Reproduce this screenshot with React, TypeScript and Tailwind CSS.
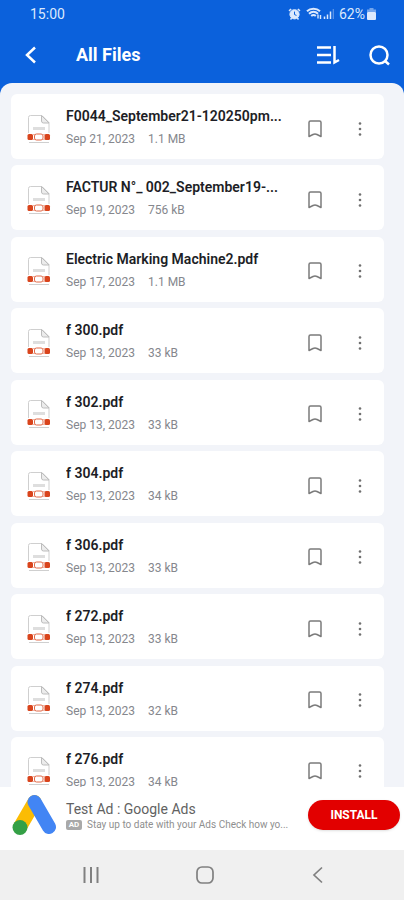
interface FileInfo {
    name: string
    date: string
    size: string
}

const files: FileInfo[] = [
    { name: 'F0044_September21-120250pm...', date: 'Sep 21, 2023', size: '1.1 MB' },
    { name: 'FACTUR N°_ 002_September19-...', date: 'Sep 19, 2023', size: '756 kB' },
    { name: 'Electric Marking Machine2.pdf', date: 'Sep 17, 2023', size: '1.1 MB' },
    { name: 'f 300.pdf', date: 'Sep 13, 2023', size: '33 kB' },
    { name: 'f 302.pdf', date: 'Sep 13, 2023', size: '33 kB' },
    { name: 'f 304.pdf', date: 'Sep 13, 2023', size: '34 kB' },
    { name: 'f 306.pdf', date: 'Sep 13, 2023', size: '33 kB' },
    { name: 'f 272.pdf', date: 'Sep 13, 2023', size: '33 kB' },
    { name: 'f 274.pdf', date: 'Sep 13, 2023', size: '32 kB' },
    { name: 'f 276.pdf', date: 'Sep 13, 2023', size: '34 kB' },
]

const StatusBar = () => (
    <div className="flex h-[27px] items-center justify-between pl-[30px] pr-7 text-sm text-[#dce9fd]">
        <span>15:00</span>
        <div className="flex items-center gap-[5px]">
            <svg width="13" height="12" viewBox="0 0 13 12" fill="none" stroke="currentColor">
                <circle cx="6.5" cy="6.3" r="4.6" fill="currentColor" />
                <path d="M1 2.8 3.2 1M12 2.8 9.8 1M2.5 11.5l1.2-1.5M10.5 11.5 9.3 10" strokeWidth="1.5" />
                <path d="M6.5 3.6v3l2 .8" stroke="#0b61dc" />
            </svg>
            <svg width="28" height="13" viewBox="0 0 28 13" fill="none" stroke="currentColor">
                <path d="M1 4.3C4.5.8 10.5.8 14 4.3M3 6.8c2.7-2.6 6.3-2.6 9 0M5.2 9c1.5-1.3 3.1-1.3 4.6 0" strokeWidth="2" />
                <path d="M12 7.5v4M14.5 8v4" strokeWidth="1.4" />
                <path d="M18.500 12V9.500M21.500 12V7.500M24.500 12V4.500" strokeWidth="1.500" />
                <path d="M27.300 12V2" strokeWidth="1.200" opacity=".4" />
            </svg>
            <div className="flex items-center gap-0.5">
                <span>62%</span>
                <svg width="9" height="12" viewBox="0 0 9 12" fill="currentColor">
                    <path d="M2.5 0h4v1.5H9V4H0V1.5h2.5z" opacity=".5" />
                    <rect y="4" width="9" height="8" rx="1" />
                </svg>
            </div>
        </div>
    </div>
)

const PdfIcon = () => (
    <svg width="24" height="30" viewBox="0 0 24 30" fill="none">
        <path d="M1.500 19V3.500a2 2 0 0 1 2-2h11.500l7 7V19" stroke="#cfcfcf" />
        <path d="M14.500 1.500V7a2 2 0 0 0 2 2H22z" fill="#ececec" stroke="#bdbdbd" />
        <path d="M6 14.500h12" stroke="#dedede" strokeWidth="3" />
        <rect x="0.500" y="20" width="5.500" height="6" rx="1.500" fill="#d9441c" />
        <rect x="17.500" y="20" width="5.500" height="6" rx="1.500" fill="#d9441c" />
        <path d="M6 20.500h2M16 20.500h2M6 25.500h2M16 25.500h2" stroke="#f0b5a4" />
        <rect x="7.500" y="20" width="8.500" height="6" rx="2" stroke="#e26a49" />
        <path d="M2 28.500h20" stroke="#cfcfcf" />
    </svg>
)

const FileCard = ({ file }: { file: FileInfo }) => (
    <li className="flex h-[65px] items-center rounded-md bg-white pl-4 pr-[18px]">
        <div className="mt-1">
            <PdfIcon />
        </div>
        <div className="ml-[15px] min-w-0 flex-1">
            <div className="truncate text-sm leading-5 font-semibold text-[#1d1e26]">{file.name}</div>
            <div className="mt-[5px] flex gap-[13px] text-xs leading-4 text-[#85878d]">
                <span>{file.date}</span>
                <span>{file.size}</span>
            </div>
        </div>
        <button className="mt-1 ml-2 shrink-0" aria-label={`Bookmark ${file.name}`}>
            <svg width="14" height="18" viewBox="0 0 14 18" fill="none" stroke="#7b7b7b" strokeWidth="1.5">
                <path d="M1 16.500V2.500a1.500 1.500 0 0 1 1.500-1.500h9A1.500 1.500 0 0 1 13 2.500v14L9 14.500q-2-1-4 0z" strokeLinejoin="round" />
            </svg>
        </button>
        <button className="mt-1 ml-8 flex w-3 shrink-0 justify-center" aria-label={`More options for ${file.name}`}>
            <svg width="4" height="16" viewBox="0 0 4 16" fill="#707070">
                <circle cx="2" cy="2.5" r="1.3" />
                <circle cx="2" cy="8" r="1.3" />
                <circle cx="2" cy="13.5" r="1.3" />
            </svg>
        </button>
    </li>
)

const AdBanner = () => (
    <div className="flex h-[63px] shrink-0 items-center bg-white pb-[7px] pl-3 pr-1">
        <svg className="shrink-0" width="46" height="42" viewBox="0 0 46 42" fill="none" strokeLinecap="round">
            <path d="M22.500 8 8 33" stroke="#fbbc04" strokeWidth="14" />
            <path d="M22.500 8 37 33" stroke="#4285f4" strokeWidth="14" />
            <circle cx="8" cy="33.500" r="7.500" fill="#34a046" />
        </svg>
        <div className="ml-2 min-w-0 flex-1">
            <div className="text-sm leading-5 text-[#626262]">Test Ad : Google Ads</div>
            <div className="flex items-center gap-[5px]">
                <span className="flex h-[10px] w-4 shrink-0 items-center justify-center rounded-xs bg-[#a9a9a9] text-[8px] font-bold text-white">AD</span>
                <span className="text-[10px] leading-3 whitespace-nowrap text-[#8f8f8f]">Stay up to date with your Ads Check how yo...</span>
            </div>
        </div>
        <button className="h-[30px] w-[92px] shrink-0 rounded-full bg-[#e20000] text-xs font-bold text-white shadow-sm">INSTALL</button>
    </div>
)

const NavBar = () => (
    <nav className="flex h-[50px] shrink-0 items-center justify-between bg-[#f0f0f0] pl-[82px] pr-[77px] text-[#808080]">
        <button aria-label="Recent apps">
            <svg width="18" height="18" viewBox="0 0 18 18" stroke="currentColor" strokeWidth="2">
                <path d="M2.500 1v16M9 1v16M15.500 1v16" />
            </svg>
        </button>
        <button aria-label="Home">
            <svg width="18" height="18" viewBox="0 0 18 18" fill="none" stroke="currentColor" strokeWidth="1.700">
                <rect x="1" y="1" width="16" height="16" rx="5" />
            </svg>
        </button>
        <button aria-label="Back">
            <svg width="18" height="18" viewBox="0 0 18 18" fill="none" stroke="currentColor" strokeWidth="1.700">
                <path d="M13 1.500 5 9l8 7.500" />
            </svg>
        </button>
    </nav>
)

const App = () => {
    return (
        <div className="flex h-screen flex-col bg-[#0b61dc] font-[Roboto,sans-serif]">
            <header className="shrink-0">
                <StatusBar />
                <div className="flex h-14 items-center pl-[25px] pr-[14px] text-white">
                    <button aria-label="Go back">
                        <svg width="12" height="18" viewBox="0 0 12 18" fill="none" stroke="currentColor" strokeWidth="2.5">
                            <path d="M10 1.500 2 9l8 7.500" />
                        </svg>
                    </button>
                    <h1 className="ml-[39px] flex-1 text-lg font-bold">All Files</h1>
                    <button aria-label="Sort">
                        <svg width="24" height="20" viewBox="0 0 24 20" fill="none" stroke="currentColor" strokeWidth="2.5">
                            <path d="M1 2.500h14M1 10h14M1 17.500h14" />
                            <path d="M18.500 1v16.500L23 15" />
                        </svg>
                    </button>
                    <button className="ml-[29px]" aria-label="Search">
                        <svg width="21" height="21" viewBox="0 0 21 21" fill="none" stroke="currentColor" strokeWidth="2.5">
                            <circle cx="10" cy="10" r="8.500" />
                            <path d="m15.500 15.500 4.500 4" />
                        </svg>
                    </button>
                </div>
            </header>
            <main className="min-h-0 flex-1 overflow-hidden rounded-t-xl bg-[#f2f4f9] pt-[11px] pr-5 pl-[11px]">
                <ul className="flex min-h-[708px] flex-col justify-between">
                    {files.map((file) => (
                        <FileCard key={file.name} file={file} />
                    ))}
                </ul>
            </main>
            <AdBanner />
            <NavBar />
        </div>
    )
}

export default App
